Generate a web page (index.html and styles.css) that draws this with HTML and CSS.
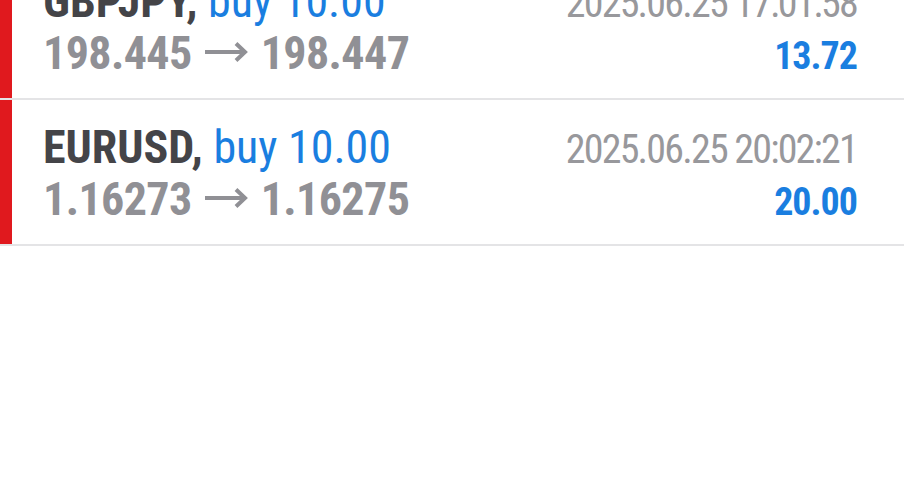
FILE: index.html
```html
<!DOCTYPE html>
<html lang="en">
<head>
    <meta charset="UTF-8">
    <meta name="viewport" content="width=device-width, initial-scale=1.0">
    <title>History - Deals</title>
    <link rel="stylesheet" href="styles.css">
</head>
<body>
    <div class="deals">
        <div class="deal">
            <div class="side sell"></div>
            <div class="info">
                <div class="line">
                    <span class="title"><span class="symbol">GBPJPY,</span> <span class="type">buy 10.00</span></span>
                    <span class="time">2025.06.25 17:01:58</span>
                </div>
                <div class="line">
                    <span class="prices">198.445<svg class="arrow" width="43" height="20" viewBox="0 0 43 20"><path d="M0 10H40M31 1.5L40 10L31 18.5" fill="none" stroke="currentColor" stroke-width="4"/></svg>198.447</span>
                    <span class="profit">13.72</span>
                </div>
            </div>
        </div>

        <div class="deal">
            <div class="side sell"></div>
            <div class="info">
                <div class="line">
                    <span class="title"><span class="symbol">EURUSD,</span> <span class="type">buy 10.00</span></span>
                    <span class="time">2025.06.25 20:02:21</span>
                </div>
                <div class="line">
                    <span class="prices">1.16273<svg class="arrow" width="43" height="20" viewBox="0 0 43 20"><path d="M0 10H40M31 1.5L40 10L31 18.5" fill="none" stroke="currentColor" stroke-width="4"/></svg>1.16275</span>
                    <span class="profit">20.00</span>
                </div>
            </div>
        </div>
    </div>
</body>
</html>
```

FILE: styles.css
```css
body {
    margin: 0;
    background-color: #fff;
    font-family: "Roboto Condensed", Roboto, sans-serif;
    font-stretch: condensed;
}
.deals {
    margin-top: -46px;
}
.deal {
    display: flex;
    height: 144px;
    border-bottom: 2px solid #e4e4e6;
}
.side {
    width: 12px;
    flex-shrink: 0;
}
.sell {
    background-color: #e0191e;
}
.info {
    flex: 1;
    padding: 21px 47px 0 31px;
}
.line {
    display: flex;
    justify-content: space-between;
    align-items: baseline;
    height: 52px;
    line-height: 52px;
}
.title {
    font-size: 46px;
}
.symbol {
    color: #444448;
    font-weight: bold;
}
.type {
    color: #1a7ee0;
}
.time {
    font-size: 40px;
    letter-spacing: -1.8px;
    color: #98989c;
}
.prices {
    font-size: 46px;
    font-weight: bold;
    letter-spacing: -0.6px;
    color: #909095;
}
.arrow {
    margin: 0 13px 0 13px;
    vertical-align: 7px;
}
.profit {
    font-size: 38px;
    font-weight: bold;
    letter-spacing: -1px;
    color: #1a7ee0;
}
```
